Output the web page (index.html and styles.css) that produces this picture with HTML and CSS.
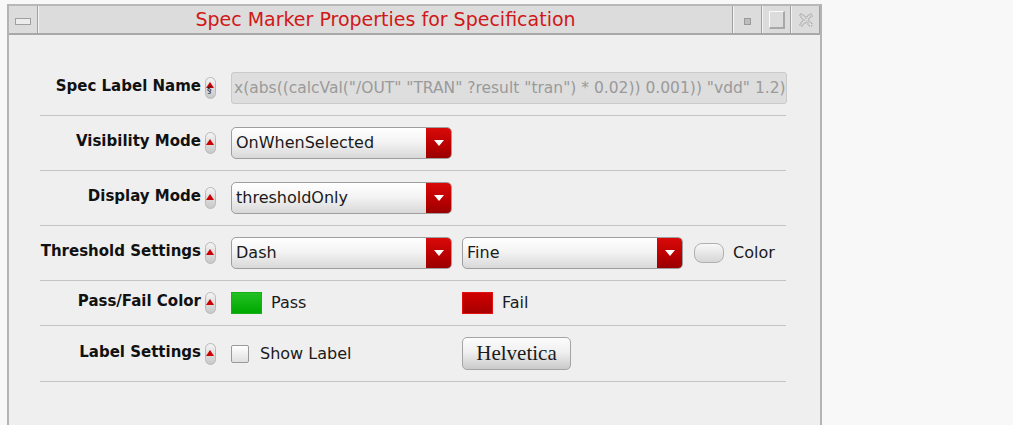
FILE: index.html
```html
<!DOCTYPE html>
<html>
<head>
<meta charset="utf-8">
<link rel="stylesheet" href="styles.css">
</head>
<body>
<div class="window">
  <div class="titlebar">
    <div class="tb-btn tb-menu"><span class="menu-bar"></span></div>
    <div class="tb-title">Spec Marker Properties for Specification</div>
    <div class="tb-btn tb-min"><span class="min-dot"></span></div>
    <div class="tb-btn tb-max"><span class="max-box"></span></div>
    <div class="tb-btn tb-close">
      <svg width="18" height="18" viewBox="0 0 18 18"><path d="M3 3h3v2h2v2h2V5h2V3h3v3h-2v2h-2v2h2v2h2v3h-3v-2h-2v-2H8v2H6v2H3v-3h2v-2h2V8H5V6H3z" fill="none" stroke="#aaa" stroke-width="1" stroke-dasharray="2 1"/></svg>
    </div>
  </div>
  <div class="content">
    <div class="form">
      <div class="row">
        <div class="label">Spec Label Name</div>
        <span class="pin pin-s"><span class="pin-tri"></span><span class="pin-s-mark">§</span></span>
        <div class="controls">
          <div class="textfield">x(abs((calcVal("/OUT" "TRAN" ?result "tran") * 0.02)) 0.001)) "vdd" 1.2)</div>
        </div>
      </div>
      <div class="row">
        <div class="label">Visibility Mode</div>
        <span class="pin"><span class="pin-tri"></span></span>
        <div class="controls">
          <div class="combo"><span class="combo-text">OnWhenSelected</span><span class="combo-btn"><span class="combo-arrow"></span></span></div>
        </div>
      </div>
      <div class="row">
        <div class="label">Display Mode</div>
        <span class="pin"><span class="pin-tri"></span></span>
        <div class="controls">
          <div class="combo"><span class="combo-text">thresholdOnly</span><span class="combo-btn"><span class="combo-arrow"></span></span></div>
        </div>
      </div>
      <div class="row">
        <div class="label">Threshold Settings</div>
        <span class="pin"><span class="pin-tri"></span></span>
        <div class="controls">
          <div class="combo"><span class="combo-text">Dash</span><span class="combo-btn"><span class="combo-arrow"></span></span></div>
          <div class="combo"><span class="combo-text">Fine</span><span class="combo-btn"><span class="combo-arrow"></span></span></div>
          <span class="toggle"></span>
          <span class="plain">Color</span>
        </div>
      </div>
      <div class="row row-short">
        <div class="label">Pass/Fail Color</div>
        <span class="pin"><span class="pin-tri"></span></span>
        <div class="controls">
          <div class="cell"><span class="swatch swatch-pass"></span><span class="plain">Pass</span></div>
          <div class="cell"><span class="swatch swatch-fail"></span><span class="plain">Fail</span></div>
        </div>
      </div>
      <div class="row">
        <div class="label">Label Settings</div>
        <span class="pin"><span class="pin-tri"></span></span>
        <div class="controls">
          <div class="cell"><span class="checkbox"></span><span class="plain">Show Label</span></div>
          <div class="cell"><span class="fontbtn">Helvetica</span></div>
        </div>
      </div>
    </div>
  </div>
</div>
</body>
</html>
```

FILE: styles.css
```css
html, body {
  margin: 0;
  padding: 0;
}
body {
  background: #f8f8f8;
  height: 425px;
  overflow: hidden;
  padding-top: 4px;
  box-sizing: border-box;
  font-family: "DejaVu Sans", "Liberation Sans", sans-serif;
}
.window {
  margin-left: 7px;
  width: 815px;
  height: 421px;
  box-sizing: border-box;
  border-left: 2px solid #b4b4b4;
  border-right: 2px solid #b4b4b4;
  background: #efefef;
  display: flex;
  flex-direction: column;
}
.titlebar {
  height: 31px;
  display: flex;
  background: #dcdcdc;
  border-top: 2px solid #b8b8b8;
  border-bottom: 2px solid #a8a8a8;
  box-sizing: border-box;
}
.tb-btn {
  width: 29px;
  display: flex;
  align-items: center;
  justify-content: center;
  border-left: 1px solid #f4f4f4;
  border-right: 1px solid #a0a0a0;
  box-sizing: border-box;
}
.tb-menu {
  width: 29px;
  border-left: none;
}
.menu-bar {
  width: 14px;
  height: 5px;
  border: 1px solid #a0a0a0;
  background: #ececec;
  margin-top: 3px;
}
.tb-title {
  flex: 1;
  text-align: center;
  color: #d01818;
  font-size: 19px;
  line-height: 27px;
  border-left: 1px solid #f4f4f4;
  border-right: 1px solid #a0a0a0;
}
.min-dot {
  width: 5px;
  height: 5px;
  background: #bdbdbd;
  border: 1px solid #9a9a9a;
  margin-top: 4px;
}
.max-box {
  width: 13px;
  height: 15px;
  border-top: 1px solid #fafafa;
  border-left: 1px solid #fafafa;
  border-right: 2px solid #a8a8a8;
  border-bottom: 2px solid #a8a8a8;
}
.tb-close svg {
  display: block;
}
.content {
  flex: 1;
  padding-top: 26px;
  padding-left: 31px;
}
.form {
  width: 746px;
}
.row {
  display: flex;
  align-items: center;
  padding: 11px 0 11px;
  border-bottom: 1px solid #c4c4c4;
  min-height: 32px;
}
.row-short {
  min-height: 22px;
}
.label {
  width: 161px;
  text-align: right;
  font-weight: bold;
  font-size: 15px;
  line-height: 18px;
  color: #111;
  flex: none;
  white-space: nowrap;
  padding-bottom: 4px;
}
.pin {
  position: relative;
  width: 11px;
  height: 22px;
  margin-left: 4px;
  margin-right: 15px;
  border-radius: 6px;
  background: linear-gradient(#f4f4f4, #c8c8c8);
  border: 1px solid #b8b8b8;
  box-sizing: border-box;
  flex: none;
}
.pin-tri {
  position: absolute;
  left: 0px;
  top: 6px;
  width: 0;
  height: 0;
  border-left: 4.5px solid transparent;
  border-right: 4.5px solid transparent;
  border-bottom: 6px solid #cc0000;
}
.pin-s .pin-tri {
  top: 4px;
}
.pin-s-mark {
  position: absolute;
  left: 1px;
  top: 6px;
  font-size: 9px;
  line-height: 12px;
  color: #222;
}
.controls {
  display: flex;
  align-items: center;
  flex: 1;
}
.textfield {
  flex: 1;
  height: 32px;
  box-sizing: border-box;
  background: #dedede;
  border: 1px solid #cacaca;
  border-radius: 3px;
  color: #9a9a9a;
  font-size: 15.5px;
  line-height: 30px;
  padding-left: 2px;
  white-space: nowrap;
  overflow: hidden;
}
.combo {
  width: 221px;
  height: 32px;
  box-sizing: border-box;
  display: flex;
  border: 1px solid #9e9e9e;
  border-radius: 5px;
  background: linear-gradient(#ffffff, #f4f4f4 45%, #d8d8d8);
  overflow: hidden;
  margin-right: 10px;
  flex: none;
}
.combo-text {
  flex: 1;
  font-size: 16px;
  line-height: 30px;
  padding-left: 4px;
  color: #1a1a1a;
}
.combo-btn {
  width: 25px;
  background: linear-gradient(#d90a0a, #b80000 60%, #9a0000);
  display: flex;
  align-items: center;
  justify-content: center;
}
.combo-arrow {
  width: 0;
  height: 0;
  border-left: 5px solid transparent;
  border-right: 5px solid transparent;
  border-top: 6px solid #ffffff;
}
.toggle {
  width: 30px;
  height: 20px;
  box-sizing: border-box;
  margin-left: 1px;
  margin-right: 9px;
  border-radius: 8px;
  border: 1px solid #b0b0b0;
  background: linear-gradient(#f8f8f8, #d6d6d6);
  flex: none;
}
.plain {
  font-size: 16px;
  line-height: 20px;
  color: #1a1a1a;
}
.cell {
  width: 231px;
  display: flex;
  align-items: center;
  flex: none;
}
.swatch {
  width: 31px;
  height: 22px;
  box-sizing: border-box;
  margin-right: 9px;
  flex: none;
}
.swatch-pass {
  background: linear-gradient(#22c022, #00a800);
  border: 1px solid #16b016;
}
.swatch-fail {
  background: linear-gradient(#d00000, #a80000);
  border: 1px solid #e01010;
}
.checkbox {
  width: 18px;
  height: 18px;
  box-sizing: border-box;
  border: 1px solid #9a9a9a;
  border-radius: 2px;
  background: linear-gradient(#ffffff, #e0e0e0);
  margin-right: 11px;
  flex: none;
}
.fontbtn {
  display: block;
  width: 109px;
  height: 33px;
  box-sizing: border-box;
  border: 1px solid #a4a4a4;
  border-radius: 5px;
  background: linear-gradient(#fcfcfc, #f0f0f0 45%, #cacaca);
  font-family: "Liberation Serif", "DejaVu Serif", serif;
  font-size: 21px;
  line-height: 31px;
  text-align: center;
  color: #1a1a1a;
}
```
